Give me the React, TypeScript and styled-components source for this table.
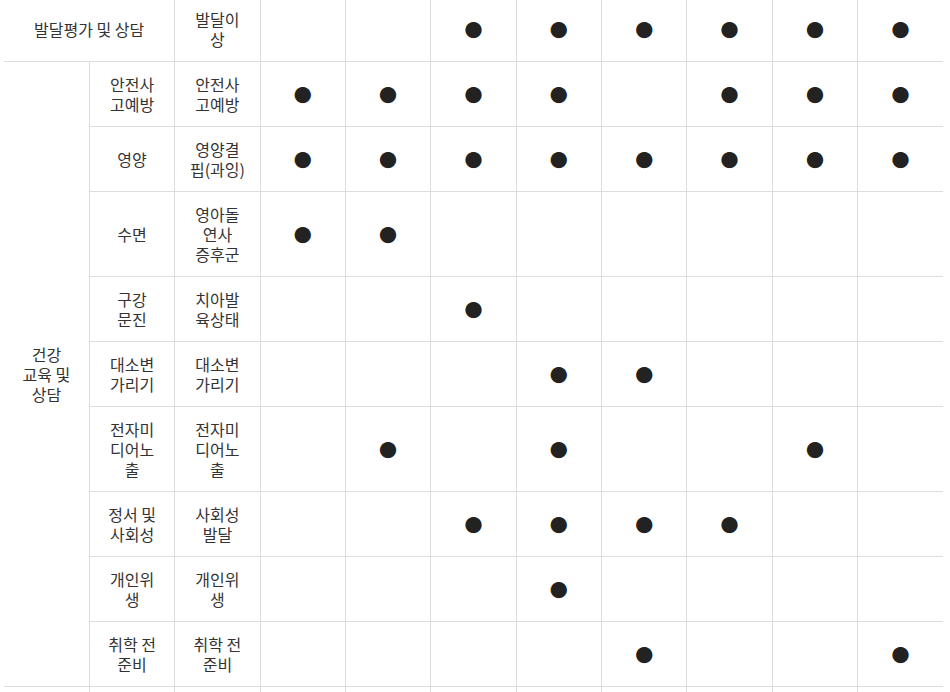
import React from "react";
import styled, { createGlobalStyle } from "styled-components";

const Global = createGlobalStyle`
  html, body { margin: 0; padding: 0; background: #fff; }
  body {
    font-family: "Noto Sans CJK KR", "Noto Sans", sans-serif;
    color: #333;
    overflow: hidden;
  }
`;

const Wrap = styled.div`
  padding: 0 7px 0 4px;
  margin-top: -4px;
`;

const Table = styled.table`
  width: 939px;
  border-collapse: collapse;
  table-layout: fixed;
  font-size: 16px;
  line-height: 20px;
`;

const Cell = styled.td`
  border: 1px solid #dddddd;
  padding: 12px 14px;
  text-align: center;
  vertical-align: middle;
  color: #333;
  word-break: keep-all;
  overflow-wrap: anywhere;
  &:first-child { border-left: none; }
  &:last-child { border-right: none; }
`;

const Dot = styled.span`
  display: inline-block;
  font-size: 18px;
  line-height: 20px;
  color: #222;
`;

type Row = { sub: string; item: string; marks: number[] };

const rows: Row[] = [
  { sub: "안전사고예방", item: "안전사고예방", marks: [1, 1, 1, 1, 0, 1, 1, 1] },
  { sub: "영양", item: "영양결핍(과잉)", marks: [1, 1, 1, 1, 1, 1, 1, 1] },
  { sub: "수면", item: "영아돌연사 증후군", marks: [1, 1, 0, 0, 0, 0, 0, 0] },
  { sub: "구강 문진", item: "치아발육상태", marks: [0, 0, 1, 0, 0, 0, 0, 0] },
  { sub: "대소변 가리기", item: "대소변 가리기", marks: [0, 0, 0, 1, 1, 0, 0, 0] },
  { sub: "전자미디어노출", item: "전자미디어노출", marks: [0, 1, 0, 1, 0, 0, 1, 0] },
  { sub: "정서 및 사회성", item: "사회성 발달", marks: [0, 0, 1, 1, 1, 1, 0, 0] },
  { sub: "개인위생", item: "개인위생", marks: [0, 0, 0, 1, 0, 0, 0, 0] },
  { sub: "취학 전 준비", item: "취학 전 준비", marks: [0, 0, 0, 0, 1, 0, 0, 1] },
];

const Marks = ({ marks }: { marks: number[] }) => (
  <>
    {marks.map((m, i) => (
      <Cell key={i}>{m ? <Dot>●</Dot> : null}</Cell>
    ))}
  </>
);

export default function App() {
  return (
    <>
      <Global />
      <Wrap>
        <Table>
          <tbody>
            <tr>
              <Cell colSpan={2}>발달평가 및 상담</Cell>
              <Cell>발달이상</Cell>
              <Marks marks={[0, 0, 1, 1, 1, 1, 1, 1]} />
            </tr>
            {rows.map((r, idx) => (
              <tr key={idx}>
                {idx === 0 && <Cell rowSpan={rows.length}>건강 교육 및 상담</Cell>}
                <Cell>{r.sub}</Cell>
                <Cell>{r.item}</Cell>
                <Marks marks={r.marks} />
              </tr>
            ))}
            <tr>
              <Cell />
              <Cell />
              <Cell />
              <Marks marks={[0, 0, 0, 0, 0, 0, 0, 0]} />
            </tr>
          </tbody>
        </Table>
      </Wrap>
    </>
  );
}
